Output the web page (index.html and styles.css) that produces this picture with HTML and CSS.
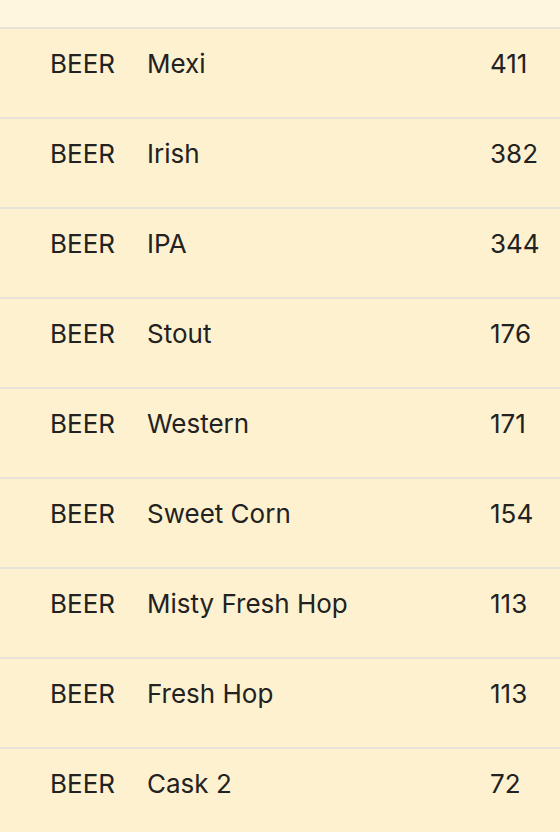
FILE: index.html
```html
<!DOCTYPE html>
<html>
<head>
<meta charset="utf-8">
<link rel="stylesheet" href="styles.css">
</head>
<body>
<div class="top"></div>
<div class="list">
  <div class="row"><span class="cat">BEER</span><span class="name">Mexi</span><span class="num">411</span></div>
  <div class="row"><span class="cat">BEER</span><span class="name">Irish</span><span class="num">382</span></div>
  <div class="row"><span class="cat">BEER</span><span class="name">IPA</span><span class="num">344</span></div>
  <div class="row"><span class="cat">BEER</span><span class="name">Stout</span><span class="num">176</span></div>
  <div class="row"><span class="cat">BEER</span><span class="name">Western</span><span class="num">171</span></div>
  <div class="row"><span class="cat">BEER</span><span class="name">Sweet Corn</span><span class="num">154</span></div>
  <div class="row"><span class="cat">BEER</span><span class="name">Misty Fresh Hop</span><span class="num">113</span></div>
  <div class="row"><span class="cat">BEER</span><span class="name">Fresh Hop</span><span class="num">113</span></div>
  <div class="row"><span class="cat">BEER</span><span class="name">Cask 2</span><span class="num">72</span></div>
</div>
</body>
</html>
```
FILE: styles.css
```css
html, body {
  margin: 0;
  padding: 0;
}
body {
  background: #fef1cf;
  font-family: Inter, "Noto Sans", sans-serif;
  color: #222222;
  overflow: hidden;
}
.top {
  height: 27px;
  background: #fef6dd;
}
.row {
  display: flex;
  align-items: flex-start;
  height: 88px;
  border-top: 2px solid #e7e3d8;
  box-sizing: content-box;
  font-size: 26px;
  line-height: 32px;
  padding: 0;
}
.row span {
  display: block;
  padding-top: 19px;
}
.cat {
  width: 97px;
  padding-left: 50px;
}
.name {
  width: 343px;
}
.num {
  flex: 1;
}
```
